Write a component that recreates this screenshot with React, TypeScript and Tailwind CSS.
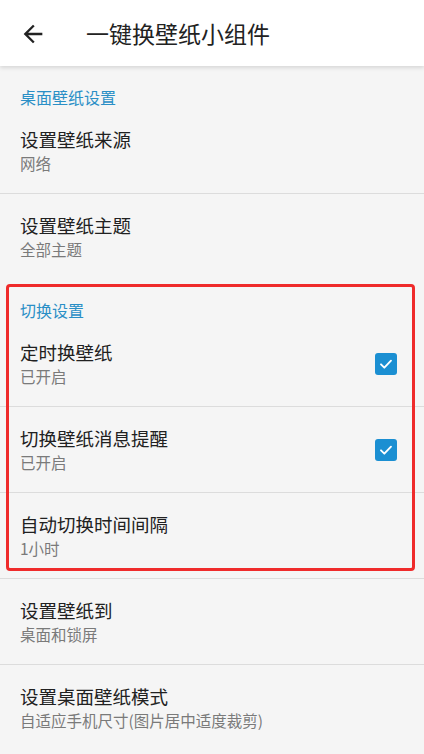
import React from "react";

type Item = {
  title: string;
  summary: string;
  checked?: boolean;
};

const font = { fontFamily: '"Noto Sans CJK SC", "Noto Sans", Roboto, sans-serif' };

function Divider() {
  return <div className="h-px bg-[#dcdcdc]" />;
}

function Category({ label }: { label: string }) {
  return (
    <div className="h-[42px] pl-5 pt-[22px]">
      <p className="text-[16px] leading-[18px] text-[#2a8fc6]">{label}</p>
    </div>
  );
}

function Checkbox() {
  return (
    <span className="flex h-[22px] w-[22px] items-center justify-center rounded-[3px] bg-[#1b8fd2]">
      <svg width="16" height="16" viewBox="0 0 24 24" fill="none">
        <path
          d="M4.5 12.5l5 5 10-10.5"
          stroke="white"
          strokeWidth="2.8"
          strokeLinecap="round"
          strokeLinejoin="round"
        />
      </svg>
    </span>
  );
}

function Row({ item }: { item: Item }) {
  return (
    <div className="flex h-[85px] items-start pl-5 pr-[27px] pt-[19px]">
      <div className="min-w-0 flex-1">
        <p className="text-[18.5px] leading-[24px] text-[#212121]">{item.title}</p>
        <p className="mt-[2px] text-[15.5px] leading-[20px] text-[#7a7a7a]">{item.summary}</p>
      </div>
      {item.checked !== undefined && (
        <div className="pt-[13px]">
          <Checkbox />
        </div>
      )}
    </div>
  );
}

export default function App() {
  return (
    <div className="flex h-[754px] w-[424px] flex-col overflow-hidden bg-[#f5f5f5]" style={font}>
      <header className="relative z-10 flex h-[66px] shrink-0 items-center bg-white shadow-[0_2px_4px_rgba(0,0,0,0.12)]">
        <svg className="ml-[19px] mt-[2px]" width="28" height="28" viewBox="0 0 24 24" fill="#222">
          <path d="M20 11H7.83l5.59-5.59L12 4l-8 8 8 8 1.41-1.41L7.83 13H20v-2z" />
        </svg>
        <h1 className="ml-[39px] text-[23px] leading-none text-[#222]">一键换壁纸小组件</h1>
      </header>

      <Category label="桌面壁纸设置" />
      <Row item={{ title: "设置壁纸来源", summary: "网络" }} />
      <Divider />
      <Row item={{ title: "设置壁纸主题", summary: "全部主题" }} />

      <div className="relative">
        <Category label="切换设置" />
        <Row item={{ title: "定时换壁纸", summary: "已开启", checked: true }} />
        <Divider />
        <Row item={{ title: "切换壁纸消息提醒", summary: "已开启", checked: true }} />
        <Divider />
        <Row item={{ title: "自动切换时间间隔", summary: "1小时" }} />
        <div className="pointer-events-none absolute left-[6px] right-[9px] top-[5px] bottom-[7px] rounded-[4px] border-[3px] border-[#ef2b2b]" />
      </div>
      <Divider />
      <Row item={{ title: "设置壁纸到", summary: "桌面和锁屏" }} />
      <Divider />
      <Row item={{ title: "设置桌面壁纸模式", summary: "自适应手机尺寸(图片居中适度裁剪)" }} />
    </div>
  );
}
